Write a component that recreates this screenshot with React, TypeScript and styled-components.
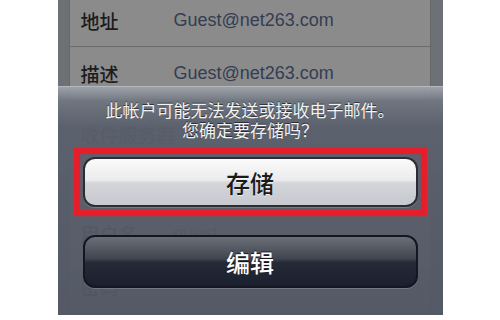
import { createGlobalStyle, styled } from 'styled-components';

const GlobalStyle = createGlobalStyle`
    html, body {
        margin: 0;
        padding: 0;
        background: #ffffff;
    }
    * {
        box-sizing: border-box;
    }
`

interface IRow {
    label: string
    value: string
}

const accountRows: IRow[] = [
    { label: '地址', value: 'Guest@net263.com' },
    { label: '描述', value: 'Guest@net263.com' },
]

const serverRows: IRow[] = [
    { label: '主机名', value: 'pop.net263.com' },
    { label: '用户名', value: 'guest' },
    { label: '密码', value: '••••••••' },
]

const App = () => {
    return (
        <>
            <GlobalStyle />
            <Screen>
                <TableView>
                    <Group>
                        {accountRows.map(row => (
                            <Cell key={row.label}>
                                <CellLabel>{row.label}</CellLabel>
                                <CellValue>{row.value}</CellValue>
                            </Cell>
                        ))}
                    </Group>
                    <GroupHeader>收件服务器</GroupHeader>
                    <Group>
                        {serverRows.map(row => (
                            <Cell key={row.label}>
                                <CellLabel>{row.label}</CellLabel>
                                <CellValue>{row.value}</CellValue>
                            </Cell>
                        ))}
                    </Group>
                </TableView>

                <ActionSheet>
                    <SheetMessage>
                        此帐户可能无法发送或接收电子邮件。
                        <br />
                        您确定要存储吗？
                    </SheetMessage>
                    <Highlight>
                        <SheetButton $light>存储</SheetButton>
                    </Highlight>
                    <EditRow>
                        <SheetButton>编辑</SheetButton>
                    </EditRow>
                </ActionSheet>
            </Screen>
        </>
    );
}

export default App;

const Screen = styled.div`
    position: relative;
    width: 385px;
    height: 315px;
    margin: 0 auto;
    overflow: hidden;
    background: #6d7176;
`

const TableView = styled.div`
    display: flex;
    flex-direction: column;
    margin-top: -5px;
    padding: 0 12px 0 11px;
`

const Group = styled.div`
    display: flex;
    flex-direction: column;
    background: #8b8b8b;
    border-left: 1px solid #66686c;
    border-right: 1px solid #66686c;
`

const GroupHeader = styled.div`
    height: 57px;
    display: flex;
    align-items: center;
    padding: 14px 0 0 12px;
    font-family: "Noto Sans CJK SC", sans-serif;
    font-size: 19px;
    font-weight: 700;
    color: #2f3a4c;
`

const Cell = styled.div`
    height: 52px;
    display: flex;
    align-items: center;
    padding-left: 11px;
    border-bottom: 1px solid #6b6b6b;

    &:last-child {
        border-bottom: none;
    }
`

const CellLabel = styled.span`
    width: 93px;
    font-family: "Noto Sans CJK SC", sans-serif;
    font-size: 19px;
    font-weight: 500;
    color: #1c1c1e;
`

const CellValue = styled.span`
    font-family: "Liberation Sans", Arial, sans-serif;
    font-size: 18px;
    color: #343d52;
`

const ActionSheet = styled.div`
    position: absolute;
    left: 0;
    right: 0;
    bottom: 0;
    height: 229px;
    display: flex;
    flex-direction: column;
    padding: 13px 16px 0 16px;
    border-top: 1px solid rgba(190, 194, 200, 0.9);
    background: linear-gradient(
        to bottom,
        rgba(158, 163, 171, 0.97) 0px,
        rgba(112, 118, 128, 0.95) 14px,
        rgba(90, 96, 108, 0.94) 40px,
        rgba(82, 88, 100, 0.95) 100%
    );
`

const SheetMessage = styled.p`
    margin: 0 0 8px;
    text-align: center;
    font-family: "Noto Sans CJK SC", sans-serif;
    font-size: 17px;
    line-height: 20px;
    color: #f2f3f5;
    text-shadow: 0 -1px 0 rgba(0, 0, 0, 0.55);
`

const Highlight = styled.div`
    display: flex;
    padding: 3px;
    border: 6px solid #e41f2b;
    box-shadow: 0 0 2px rgba(255, 30, 40, 0.7), inset 0 0 2px rgba(255, 30, 40, 0.6);
`

const EditRow = styled.div`
    display: flex;
    padding: 19px 9px 0;
`

const SheetButton = styled.div<{ $light?: boolean }>`
    flex: 1;
    height: ${({ $light }) => $light ? '50px' : '53px'};
    display: flex;
    align-items: center;
    justify-content: center;
    border-radius: 12px;
    font-family: "Noto Sans CJK SC", sans-serif;
    font-size: 24px;
    font-weight: 500;
    border: 2px solid ${({ $light }) => $light ? '#2a2d34' : '#14171f'};
    color: ${({ $light }) => $light ? '#1a1a1a' : '#ffffff'};
    text-shadow: ${({ $light }) => $light
        ? '0 1px 0 rgba(255, 255, 255, 0.7)'
        : '0 -1px 0 rgba(0, 0, 0, 0.7)'};
    background: ${({ $light }) => $light
        ? 'linear-gradient(to bottom, #fbfbfb 0%, #ebebed 46%, #d4d5d9 52%, #c8c9ce 100%)'
        : 'linear-gradient(to bottom, #6b6f78 0%, #40454f 44%, #252a36 52%, #1b2030 100%)'};
    box-shadow: 0 1px 0 rgba(255, 255, 255, 0.18);
`
